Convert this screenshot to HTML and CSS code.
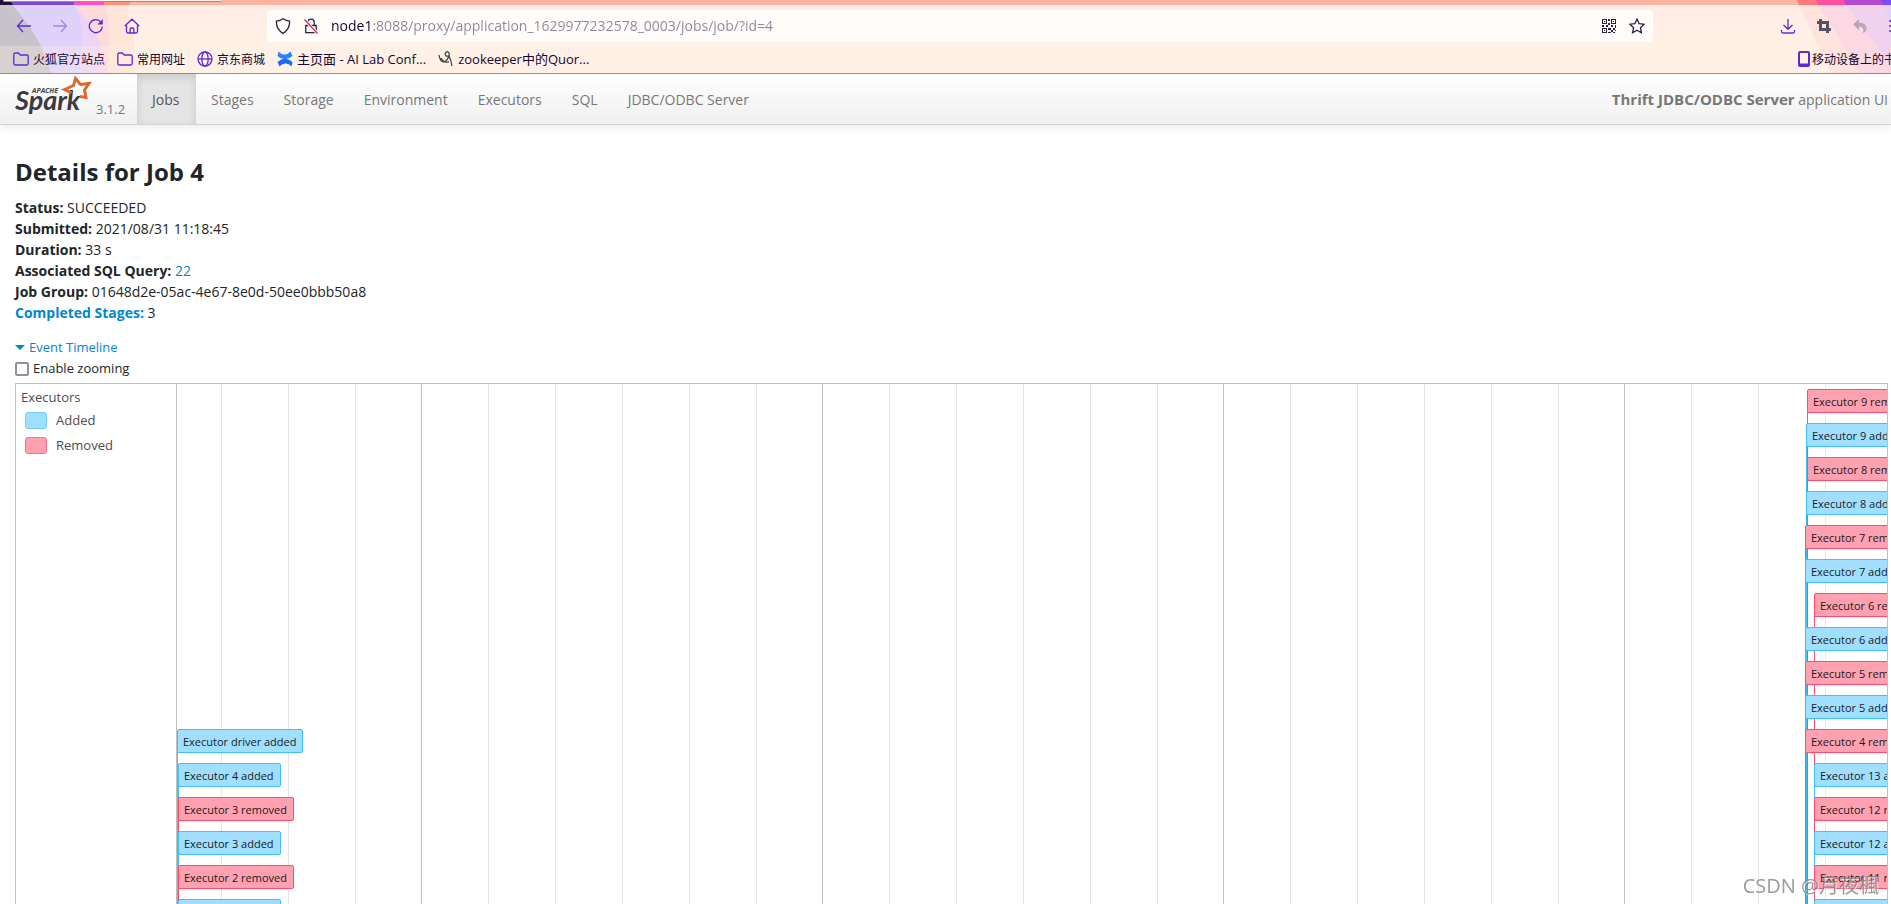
FILE: index.html
```html
<!DOCTYPE html>
<html lang="en">
<head>
<meta charset="utf-8">
<title>Thrift JDBC/ODBC Server - Details for Job 4</title>
<link rel="stylesheet" href="styles.css">
</head>
<body>
<div class="browser">
  <svg class="theme theme-left" viewBox="0 0 140 74" aria-hidden="true">
    <path d="M0 0h130v5H0z" fill="#ff9080"/>
    <path d="M0 0h104v5H0z" fill="#ff4fc8"/>
    <path d="M0 0h74v5H0z" fill="#7a48e0"/>
    <path d="M0 0h10l3 5H0z" fill="#20103a"/>
    <path d="M100 5h26q12 36 8 69h-34z" fill="#ffe6d8"/>
    <path d="M0 5h105q8 36 2 69H0z" fill="#ffdadb"/>
    <path d="M0 5h74q30 30 33 69H0z" fill="#fbd3f0"/>
    <path d="M0 5h74q22 22 28 45l-6 24H0z" fill="#ecd4f8"/>
    <path d="M0 5h74q14 22 4 69H0z" fill="#dfd2fa"/>
    <path d="M0 5h12q30 32 39 69H0z" fill="#c6c3ca"/>
    <rect y="46" width="140" height="28" fill="#fff1e5" opacity=".3"/>
  </svg>
  <svg class="theme theme-right" viewBox="0 0 120 74" aria-hidden="true">
    <path d="M26 0h94v5H28z" fill="#ff7a78"/>
    <path d="M45 0h75v5H47z" fill="#ff4f9d"/>
    <path d="M73 0h47v5H75z" fill="#b24bd0"/>
    <path d="M110 0h10v5h-8z" fill="#7a4cf5"/>
    <path d="M28 5h92v69H60z" fill="#ffe4de"/>
    <path d="M47 5h73v69H90z" fill="#fcd8e2"/>
    <path d="M75 5h45v60z" fill="#f0d2ee"/>
    <path d="M112 5h8v16z" fill="#e2d2fb"/>
  </svg>
  <div class="tab-edge"></div>
  <div class="toolbar">
    <div class="tools">
      <button aria-label="Back"><svg viewBox="0 0 16 16"><path d="M15 8H1.500M7 2L1.500 8L7 14"/></svg></button>
      <button aria-label="Forward" class="faded"><svg viewBox="0 0 16 16"><path d="M1 8h13.500M9 2l5.500 6L9 14"/></svg></button>
      <button aria-label="Reload"><svg viewBox="0 0 16 16"><path d="M14.300 8.500A6.500 6.500 0 1 1 12.300 3.500"/><path d="M14.800 1v5.500H9.300z" fill="#5b2bd6" stroke="none"/></svg></button>
      <button aria-label="Home"><svg viewBox="0 0 16 16"><path d="M.8 8L8 1.200L15.200 8M2.500 7v6.500q0 1.500 1.500 1.500h8q1.500 0 1.500-1.500V7M6.200 15v-4q0-1 1-1h1.600q1 0 1 1v4"/></svg></button>
    </div>
    <div class="urlbar">
      <svg class="ink" viewBox="0 0 16 16"><path d="M8 .8Q11 3 14.600 3.200Q15 11 8 15.400Q1 11 1.400 3.200Q5 3 8 .8z"/></svg>
      <svg class="ink" viewBox="0 0 16 16"><path d="M2.800 7.500h10.400v7.200H2.800zM4.800 7.500V4.200q0-3 3.200-3t3.200 3v3.300"/><path d="M1.500 1.500l13 14" stroke="#fff" stroke-width="3"/><path d="M1.500 1.500l13 14" stroke="#e22850"/></svg>
      <input class="address" type="text" aria-label="Address" value="node1:8088/proxy/application_1629977232578_0003/jobs/job/?id=4">
      <svg class="ink" viewBox="0 0 15 15" shape-rendering="crispEdges"><path d="M1.500 1.500h4v4h-4zM9.500 1.500h4v4h-4zM1.500 9.500h4v4h-4z" stroke-width="1"/><path d="M3 3h1v1H3zM11 3h1v1h-1zM3 11h1v1H3zM7 1h1v2H7zM7 5h1v2H7zM1 7h2v1H1zM5 7h2v1H5zM9 7h2v1H9zM13 7h1v2h-1zM7 9h2v2H7zM11 9h2v2h-2zM9 11h2v2H9zM13 11h1v1h-1zM7 13h2v1H7zM11 13h2v1h-2z" fill="#2b2145" stroke="none"/></svg>
      <svg class="ink" viewBox="0 0 16 16"><path d="M8 1l2.100 4.600 5 .6-3.700 3.500 1 5L8 12.200l-4.400 2.500 1-5L.9 6.200l5-.6z"/></svg>
    </div>
    <div class="tools tools-end">
      <button aria-label="Downloads"><svg viewBox="0 0 16 16"><path d="M8 1v10M3.500 7L8 11.300L12.500 7M1.500 12v1.500q0 1.500 1.500 1.500h10q1.500 0 1.500-1.500V12"/></svg></button>
      <button aria-label="Crop"><svg viewBox="0 0 16 16"><path d="M1 4.500h10.500V12M4.500 1v10.500H15M11.500 11v4" stroke="#55535f" stroke-width="3"/></svg></button>
      <button aria-label="Undo"><svg viewBox="0 0 16 16"><path d="M1 6.500L7 1v3.500q8 .5 7.500 6.500-.5 3-3.500 4 2-6-4-6.500V12z" fill="#b9a6bb" stroke="none"/></svg></button>
      <button aria-label="Menu"><svg viewBox="0 0 16 16"><path d="M1 3h14M1 8h14M1 13h14"/></svg></button>
    </div>
  </div>
  <div class="bookmarks">
    <a href="#"><svg viewBox="0 0 16 16"><path d="M.8 12.500v-9Q.8 2 2.300 2h3l2 2h6.400q1.500 0 1.500 1.500v7q0 1.500-1.500 1.500H2.300q-1.500 0-1.500-1.500z"/></svg>火狐官方站点</a>
    <a href="#"><svg viewBox="0 0 16 16"><path d="M.8 12.500v-9Q.8 2 2.300 2h3l2 2h6.400q1.500 0 1.500 1.500v7q0 1.500-1.500 1.500H2.300q-1.500 0-1.500-1.500z"/></svg>常用网址</a>
    <a href="#"><svg viewBox="0 0 16 16"><circle cx="8" cy="8" r="7"/><ellipse cx="8" cy="8" rx="3.200" ry="7"/><path d="M1 8h14"/></svg>京东商城</a>
    <a href="#" class="latin"><svg viewBox="0 0 16 16"><path d="M1.500.5q3 3.500 6.500 3T13.500.5L15.500 5q-4 3.500-8 3.300T.5 5z" fill="#2684ff" stroke="none"/><path d="M14.500 15.500q-3-3.500-6.500-3t-5.500 3L.5 11q4-3.500 8-3.300t7 3.300z" fill="#1a6df0" stroke="none"/></svg>主页面 - AI Lab Conf...</a>
    <a href="#" class="latin"><svg viewBox="0 0 16 16"><path d="M1 4q1 7 5 7 3-1 5-6M3 7q2 5 8 4M11 5q2 4 3 10M7 3q2-4 4-1 1 4-3 3z" stroke="#444"/></svg>zookeeper中的Quor...</a>
    <a href="#" class="mobile"><svg viewBox="0 0 12 16"><rect x="1" y="1" width="10" height="14" rx="1" stroke-width="2"/><path d="M1 13.500h10" stroke-width="2"/></svg>移动设备上的书签</a>
  </div>
</div>

<nav class="navbar">
  <a href="#" class="brand">
    <svg class="logo" viewBox="0 0 78 40" role="img" aria-label="Apache Spark">
      <text x="17" y="17" class="logo-small">APACHE</text>
      <text x="0" y="34" class="logo-name">Spark</text>
      <path d="M65 20.500L71 21.500L69.500 14L74 7.500L65.500 8.500L60.500 2.500L58.500 9.500L49.500 13.500L56.500 17" fill="none" stroke="#dc6a2a" stroke-width="3"/>
    </svg>
    <span class="version">3.1.2</span>
  </a>
  <a href="#" class="nav-link active">Jobs</a>
  <a href="#" class="nav-link">Stages</a>
  <a href="#" class="nav-link">Storage</a>
  <a href="#" class="nav-link">Environment</a>
  <a href="#" class="nav-link">Executors</a>
  <a href="#" class="nav-link">SQL</a>
  <a href="#" class="nav-link">JDBC/ODBC Server</a>
  <span class="app-name"><strong>Thrift JDBC/ODBC Server</strong> application UI</span>
</nav>

<main>
  <h1>Details for Job 4</h1>
  <ul class="summary">
    <li><strong>Status:</strong> SUCCEEDED</li>
    <li><strong>Submitted:</strong> 2021/08/31 11:18:45</li>
    <li><strong>Duration:</strong> 33 s</li>
    <li><strong>Associated SQL Query:</strong> <a href="#">22</a></li>
    <li><strong>Job Group:</strong> 01648d2e-05ac-4e67-8e0d-50ee0bbb50a8</li>
    <li><a href="#"><strong>Completed Stages:</strong></a> 3</li>
  </ul>
  <a href="#" class="toggle"><span class="arrow"></span>Event Timeline</a>
  <label class="zooming"><input type="checkbox">Enable zooming</label>

  <section class="timeline">
    <div class="groups">
      <div class="group-name">Executors</div>
      <div class="legend"><span class="swatch added"></span>Added</div>
      <div class="legend"><span class="swatch removed"></span>Removed</div>
    </div>
    <div class="plot">
      <div class="ticks">
        <div class="major lead"><i></i><i></i><i></i><i></i></div>
        <div class="major"><i></i><i></i><i></i><i></i><i></i><i></i></div>
        <div class="major"><i></i><i></i><i></i><i></i><i></i><i></i></div>
        <div class="major"><i></i><i></i><i></i><i></i><i></i><i></i></div>
        <div class="major"><i></i><i></i><i></i><i></i><i></i><i></i></div>
      </div>
      <div class="events early">
        <span class="gap"></span>
        <div class="event added t0">Executor driver added</div>
        <div class="event added t1">Executor 4 added</div>
        <div class="event removed t1">Executor 3 removed</div>
        <div class="event added t1">Executor 3 added</div>
        <div class="event removed t1">Executor 2 removed</div>
        <div class="event added t1">Executor 2 added</div>
      </div>
      <div class="events late">
        <div class="event removed t2">Executor 9 removed</div>
        <div class="event added t1">Executor 9 added</div>
        <div class="event removed t2">Executor 8 removed</div>
        <div class="event added t1">Executor 8 added</div>
        <div class="event removed t0">Executor 7 removed</div>
        <div class="event added t0">Executor 7 added</div>
        <div class="event removed t9">Executor 6 removed</div>
        <div class="event added t0">Executor 6 added</div>
        <div class="event removed t0">Executor 5 removed</div>
        <div class="event added t0">Executor 5 added</div>
        <div class="event removed t0">Executor 4 removed</div>
        <div class="event added t9">Executor 13 added</div>
        <div class="event removed t9">Executor 12 removed</div>
        <div class="event added t9">Executor 12 added</div>
        <div class="event removed t9">Executor 11 removed</div>
        <div class="event added t9">Executor 11 added</div>
      </div>
    </div>
  </section>
</main>
<div class="watermark">CSDN @月夜楓</div>
</body>
</html>
```
FILE: styles.css
```css
* { box-sizing: border-box; }
body {
  margin: 0;
  height: 100vh;
  overflow: hidden;
  display: flex;
  flex-direction: column;
  background: #fff;
  color: #212529;
  font: 13px/21px "Open Sans", "Noto Sans CJK SC", sans-serif;
}
a { color: #0088cc; text-decoration: none; }

/* browser chrome */
.browser {
  position: relative;
  flex: none;
  height: 74px;
  overflow: hidden;
  border-bottom: 1px solid #b08078;
  background: linear-gradient(#ffb3a1 5px, #ffece5 5px, #fff1e5 40px);
}
.browser svg { fill: none; stroke: #5b2bd6; stroke-width: 1.3; }
.browser .theme { position: absolute; top: 0; height: 74px; stroke: none; }
.theme-left { left: 0; width: 140px; }
.theme-right { right: 0; width: 120px; }
.tab-edge {
  position: absolute;
  top: 0;
  left: 3px;
  width: 219px;
  height: 2px;
  border-bottom: 1px solid #a578e0;
  border-radius: 0 0 3px 3px;
  background: #fff4ee;
}
.toolbar { position: relative; display: flex; align-items: center; height: 41px; margin-top: 5px; }
.tools { display: flex; gap: 20px; width: 267px; padding-left: 16px; }
.tools-end { width: 238px; flex: none; padding-left: 127px; }
.tools button { flex: none; width: 16px; height: 16px; padding: 0; border: 0; background: none; }
.tools svg { display: block; width: 16px; height: 16px; }
.faded { opacity: .45; }
.urlbar {
  flex: 1;
  display: flex;
  align-items: center;
  gap: 12px;
  height: 32px;
  padding: 0 8px;
  border-radius: 4px;
  background: #fffcfa;
}
.urlbar svg { flex: none; width: 16px; height: 16px; }
.urlbar .ink { stroke: #2b2145; }
.address {
  flex: 1;
  min-width: 0;
  height: 24px;
  padding: 0;
  border: 0;
  outline: 0;
  background: linear-gradient(to right, #15052f 41px, #8d8799 41px);
  background-clip: text;
  -webkit-background-clip: text;
  color: transparent;
  font: 14px/24px "Open Sans", sans-serif;
}
.bookmarks { position: relative; display: flex; gap: 12px; height: 26px; padding-left: 13px; align-items: center; font-size: 12px; }
.bookmarks a { display: flex; align-items: center; gap: 4px; color: #15052f; white-space: nowrap; }
.bookmarks .latin { font-size: 13px; }
.bookmarks svg { flex: none; width: 16px; height: 16px; }
.bookmarks .mobile { gap: 2px; margin-left: auto; margin-right: -17px; }
.bookmarks .mobile svg { width: 12px; }

/* application nav */
.navbar {
  flex: none;
  display: flex;
  height: 51px;
  border-bottom: 1px solid #d4d4d4;
  background: linear-gradient(#fff, #f0f0f0);
  box-shadow: 0 1px 10px rgba(0, 0, 0, .1);
  color: #777;
  font-size: 14px;
  line-height: 51px;
}
.brand { display: flex; width: 137px; padding-left: 15px; gap: 3px; color: #777; font-size: 13px; line-height: 71px; }
.logo { flex: none; width: 78px; height: 40px; margin-top: 2px; }
.logo-small { font: italic 700 7px "Open Sans", sans-serif; fill: #444; }
.logo-name { font: italic 700 27px Lato, sans-serif; fill: #3c3a3e; }
.nav-link { padding: 0 15px; color: #777; }
.nav-link.active { min-width: 59px; background: #e5e5e5; color: #555; box-shadow: inset 0 3px 8px rgba(0, 0, 0, .125); }
.app-name { margin-left: auto; padding-right: 3px; white-space: nowrap; }
.app-name strong { font-size: 15px; }

/* job details */
main { flex: 1; min-height: 0; display: flex; flex-direction: column; padding: 32px 3px 0 15px; }
h1 { margin: 0 0 10px; font-size: 24px; line-height: 30px; }
.summary { margin: 0 0 14px; padding: 0; list-style: none; font-size: 14px; }
.toggle { display: flex; align-items: center; gap: 4px; }
.arrow { border: 5px solid transparent; border-top-color: #0088cc; border-bottom: 0; }
.zooming { display: flex; align-items: center; gap: 4px; }
.zooming input { appearance: none; width: 14px; height: 14px; margin: 0; border: 2px solid #8f8f9d; border-radius: 2px; background: #fff; }

/* timeline */
.timeline { flex: 1; min-height: 0; display: flex; margin-top: 4px; border: 1px solid #bfbfbf; border-bottom: 0; color: #4d4d4d; }
.groups { width: 161px; padding: 3px 5px; border-right: 1px solid #bfbfbf; }
.legend { display: flex; align-items: center; gap: 9px; height: 25px; padding-left: 4px; }
.swatch { width: 22px; height: 17px; border: 1px solid; border-radius: 3px; }
.added { border-color: #3ec0ff; background: #a0dfff; }
.removed { border-color: #ff4d6d; background: #ffa1b0; }
.swatch.added { border-color: #6fcfff; }
.swatch.removed { border-color: #ff7088; }
.plot { position: relative; flex: 1; display: flex; overflow: hidden; }
.ticks { position: absolute; inset: 0; display: flex; }
.major { flex: none; display: flex; width: 401px; border-right: 1px solid #bfbfbf; }
.major i { width: 67px; border-right: 1px solid #e5e5e5; }
.major i:last-child { flex: 1; border: 0; }
.major.lead { width: 245px; }
.major.lead i:first-child { width: 45px; }
.events { position: relative; display: flex; flex: none; flex-direction: column; align-items: flex-start; gap: 10px; width: 1628px; padding-top: 5px; }
.gap { flex: none; height: 330px; }
.event {
  position: relative;
  flex: none;
  height: 24px;
  padding: 0 6px 0 5px;
  border-width: 1px;
  border-style: solid;
  border-radius: 2px;
  color: #1a1a1a;
  font-size: 11px;
  line-height: 23px;
  white-space: nowrap;
}
.event::after { content: ""; position: absolute; z-index: -1; top: 22px; left: -1px; height: 600px; border-left: 1px solid; border-color: inherit; }
.t1 { margin-left: 1px; }
.t2 { margin-left: 2px; }
.t9 { margin-left: 9px; }

.watermark {
  position: fixed;
  right: 12px;
  bottom: 5px;
  color: rgba(120, 120, 120, .75);
  text-shadow: 1px 1px 1px rgba(255, 255, 255, .7);
  font: 20px/26px "Open Sans", "Noto Sans CJK SC", sans-serif;
}
```
